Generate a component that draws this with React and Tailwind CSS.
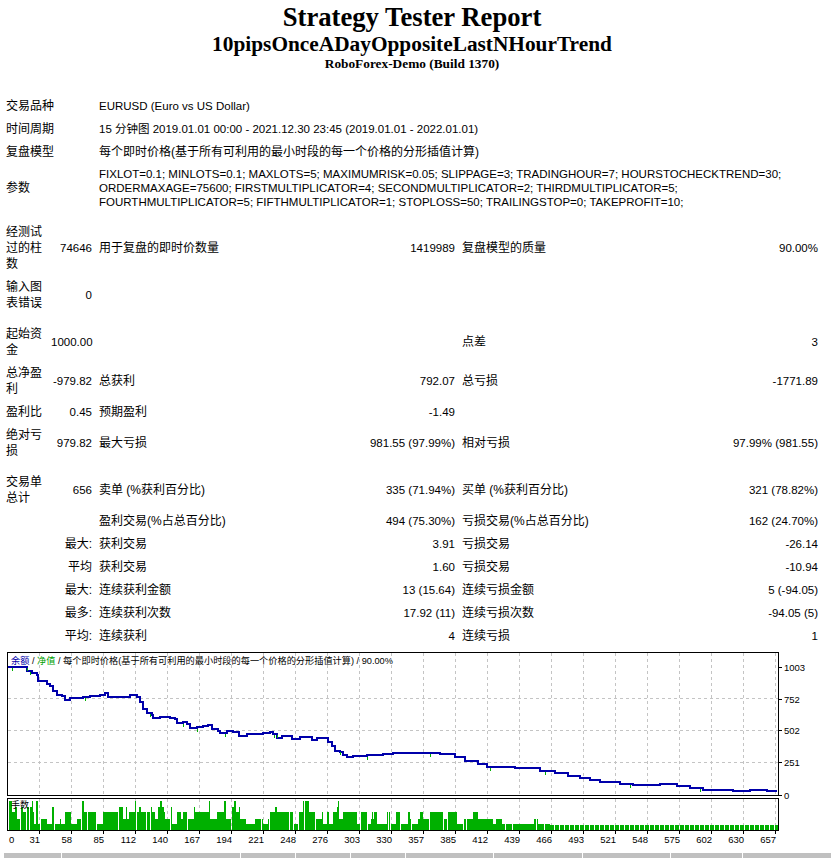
const equity = [
  [7, 668], [25, 668], [27, 672], [32, 674], [37, 676], [38, 682], [43, 682], [47, 685], [50, 687],
  [53, 692], [57, 696], [62, 697], [65, 701], [70, 699], [83, 698], [90, 697], [100, 696], [105, 694],
  [108, 698], [113, 698], [125, 698], [130, 696], [133, 696], [137, 698], [140, 703], [143, 710],
  [147, 714], [152, 716], [153, 719], [160, 718], [167, 718], [170, 719], [175, 720], [177, 724],
  [183, 723], [187, 725], [190, 729], [197, 728], [203, 727], [208, 726], [212, 730], [218, 732],
  [220, 734], [227, 732], [233, 733], [239, 737], [247, 735], [253, 735], [263, 734], [270, 733],
  [273, 735], [277, 739], [282, 737], [287, 737], [292, 740], [300, 738], [310, 738], [312, 741],
  [317, 739], [325, 739], [328, 743], [332, 747], [335, 752], [340, 753], [343, 756], [347, 758],
  [353, 757], [367, 756], [383, 755], [393, 754], [420, 754], [440, 755], [455, 758], [465, 762],
  [478, 765], [487, 768], [500, 768], [515, 769], [530, 769], [540, 772], [555, 774], [568, 777],
  [580, 779], [590, 781], [600, 783], [620, 785], [633, 786], [660, 785], [677, 787], [690, 789],
  [703, 791], [717, 791], [733, 792], [750, 791], [767, 792], [776, 793],
];

const ticks = [
  12, 27, 30, 85, 150, 183, 197, 225, 274, 277, 340, 367, 430, 490, 545, 630, 700,
];

const xLabels = [
  31, 58, 85, 112, 140, 167, 194, 221, 248, 276, 303, 330, 357, 385, 412, 439, 466, 493, 521, 548,
  575, 602, 630, 657,
];

const yLabels = [
  ["1003", 668],
  ["752", 700],
  ["502", 731],
  ["251", 763],
  ["0", 796],
];

const headCells = [57, 178, 54, 54, 54, 87, 88, 87, 71, 88];

function volumeBars() {
  let seed = 11;
  const rnd = () => {
    seed = (seed * 16807) % 2147483647;
    return seed / 2147483647;
  };
  const bars = [];
  let x = 9;
  while (x < 550) {
    let levels;
    if (x < 340) levels = [802, 808, 808, 813, 813, 813, 820, 820, 825];
    else if (x < 480) levels = [813, 813, 820, 825];
    else levels = [820, 825, 825];
    const top = levels[Math.floor(rnd() * levels.length)];
    const run = top < 810 ? 1 + Math.floor(rnd() * 2) : 1 + Math.floor(rnd() * 6);
    bars.push({ x, w: run, top });
    x += run;
    if (rnd() < 0.3) x += 1;
  }
  for (; x < 776; x += 5) bars.push({ x, w: 4, top: 826 });
  return bars;
}

// stair-step the balance line like the terminal draws it
function stepPoints(list) {
  const out = [list[0]];
  for (let i = 1; i < list.length; i++) {
    out.push([list[i][0], list[i - 1][1]]);
    out.push(list[i]);
  }
  return out.map((p) => p.join(",")).join(" ");
}

function Chart() {
  const grid = Array.from({ length: 24 }, (_, k) => 39 + 32 * k);
  const bars = volumeBars();
  const at = (x) => {
    for (let i = 1; i < equity.length; i++) {
      if (equity[i][0] >= x) return equity[i - 1][1];
    }
    return 792;
  };

  return (
    <svg
      width="832"
      height="205"
      viewBox="0 649 832 205"
      className="block"
      fontFamily="'Liberation Sans','Noto Sans CJK SC',sans-serif"
    >
      <rect x="0" y="649" width="832" height="205" fill="#fff" />

      {/* grid */}
      {grid.map((x) => (
        <g key={x} stroke="#c4c4c4" strokeDasharray="3 3">
          <line x1={x + 0.5} y1="654" x2={x + 0.5} y2="796" />
          <line x1={x + 0.5} y1="800" x2={x + 0.5} y2="831" />
        </g>
      ))}
      {[699, 731, 763].map((y) => (
        <line key={y} x1="8" y1={y + 0.5} x2="778" y2={y + 0.5} stroke="#c4c4c4" strokeDasharray="3 3" />
      ))}

      {/* volume */}
      {bars.map((b, i) => (
        <rect key={i} x={b.x} y={b.top} width={b.w} height={831 - b.top} fill="#00b000" />
      ))}

      {/* equity line */}
      <polyline
        points={stepPoints(equity)}
        fill="none"
        stroke="#0000aa"
        strokeWidth="2"
        shapeRendering="crispEdges"
      />
      {ticks.map((x) => (
        <rect key={x} x={x} y={at(x) + 1} width="1" height="3" fill="#00b000" />
      ))}

      {/* frames */}
      <rect x="7.5" y="653.5" width="771" height="143" fill="none" stroke="#000" />
      <rect x="7.5" y="799.5" width="771" height="32" fill="none" stroke="#000" />

      <text x="11" y="665" fontSize="9.2" fill="#000">
        <tspan fill="#0000aa">余额</tspan>
        <tspan> / </tspan>
        <tspan fill="#00a000">净值</tspan>
        <tspan> / 每个即时价格(基于所有可利用的最小时段的每一个价格的分形插值计算) / 90.00%</tspan>
      </text>
      <text x="11" y="809" fontSize="9" fill="#000">手数</text>

      {/* right axis */}
      {yLabels.map(([t, y]) => (
        <g key={t}>
          <line x1="779" y1={y + 0.5} x2="782" y2={y + 0.5} stroke="#000" />
          <text x="784" y={y + 3.5} fontSize="9.5" fill="#000">{t}</text>
        </g>
      ))}

      {/* bottom axis */}
      {grid.map((x) => (
        <line key={x} x1={x + 0.5} y1="832" x2={x + 0.5} y2="835" stroke="#000" />
      ))}
      <text x="9" y="844" fontSize="9.5" fill="#000">0</text>
      {xLabels.map((v, k) => (
        <text key={v} x={grid[k] + 1} y="844" fontSize="9.5" fill="#000" textAnchor="end">
          {v}
        </text>
      ))}
    </svg>
  );
}

export default function App() {
  return (
    <div className="w-[832px] h-[858px] overflow-hidden bg-white text-black font-['Liberation_Sans','Noto_Sans_CJK_SC',sans-serif] text-[11.5px] leading-[16px]">
      <div className="ml-[2px] w-[820px]">
        {/* Header */}
        <div className="pt-[2px] text-center font-['Liberation_Serif','Noto_Serif_CJK_SC',serif] font-bold">
          <div className="text-[26.67px] leading-[30px]">Strategy Tester Report</div>
          <div className="text-[21.33px] leading-[24px]">10pipsOnceADayOppositeLastNHourTrend</div>
          <div className="text-[13.33px] leading-[16px]">RoboForex-Demo (Build 1370)</div>
        </div>

        {/* Summary table */}
        <div className="mt-[22px] grid grid-cols-[44px_47px_200px_161px_200px_161px] gap-px p-px">
          <div className="col-span-2 self-center p-[3px] text-[12px]">交易品种</div>
          <div className="col-span-4 self-center p-[3px]">EURUSD (Euro vs US Dollar)</div>

          <div className="col-span-2 self-center p-[3px] text-[12px]">时间周期</div>
          <div className="col-span-4 self-center p-[3px]">15 分钟图 2019.01.01 00:00 - 2021.12.30 23:45 (2019.01.01 - 2022.01.01)</div>

          <div className="col-span-2 self-center p-[3px] text-[12px]">复盘模型</div>
          <div className="col-span-4 self-center p-[3px] text-[12px]">每个即时价格(基于所有可利用的最小时段的每一个价格的分形插值计算)</div>

          <div className="col-span-2 self-center p-[3px] text-[12px]">参数</div>
          <div className="col-span-4 self-center p-[3px] leading-[14px] whitespace-nowrap">
            FIXLOT=0.1; MINLOTS=0.1; MAXLOTS=5; MAXIMUMRISK=0.05; SLIPPAGE=3; TRADINGHOUR=7; HOURSTOCHECKTREND=30;
            <br />
            ORDERMAXAGE=75600; FIRSTMULTIPLICATOR=4; SECONDMULTIPLICATOR=2; THIRDMULTIPLICATOR=5;
            <br />
            FOURTHMULTIPLICATOR=5; FIFTHMULTIPLICATOR=1; STOPLOSS=50; TRAILINGSTOP=0; TAKEPROFIT=10;
          </div>

          <div className="col-span-6 h-[7px]" />

          <div className="self-center p-[3px] text-[12px]">经测试过的柱数</div>
          <div className="self-center p-[3px] text-right">74646</div>
          <div className="self-center p-[3px] text-[12px]">用于复盘的即时价数量</div>
          <div className="self-center p-[3px] text-right">1419989</div>
          <div className="self-center p-[3px] text-[12px]">复盘模型的质量</div>
          <div className="self-center p-[3px] text-right">90.00%</div>

          <div className="self-center p-[3px] text-[12px]">输入图表错误</div>
          <div className="self-center p-[3px] text-right">0</div>
          <div className="col-span-4" />

          <div className="col-span-6 h-[7px]" />

          <div className="self-center p-[3px] text-[12px]">起始资金</div>
          <div className="self-center p-[3px] text-right">1000.00</div>
          <div className="col-span-2" />
          <div className="self-center p-[3px] text-[12px]">点差</div>
          <div className="self-center p-[3px] text-right">3</div>

          <div className="self-center p-[3px] text-[12px]">总净盈利</div>
          <div className="self-center p-[3px] text-right">-979.82</div>
          <div className="self-center p-[3px] text-[12px]">总获利</div>
          <div className="self-center p-[3px] text-right">792.07</div>
          <div className="self-center p-[3px] text-[12px]">总亏损</div>
          <div className="self-center p-[3px] text-right">-1771.89</div>

          <div className="self-center p-[3px] text-[12px]">盈利比</div>
          <div className="self-center p-[3px] text-right">0.45</div>
          <div className="self-center p-[3px] text-[12px]">预期盈利</div>
          <div className="self-center p-[3px] text-right">-1.49</div>
          <div className="col-span-2" />

          <div className="self-center p-[3px] text-[12px]">绝对亏损</div>
          <div className="self-center p-[3px] text-right">979.82</div>
          <div className="self-center p-[3px] text-[12px]">最大亏损</div>
          <div className="self-center p-[3px] text-right">981.55 (97.99%)</div>
          <div className="self-center p-[3px] text-[12px]">相对亏损</div>
          <div className="self-center p-[3px] text-right">97.99% (981.55)</div>

          <div className="col-span-6 h-[7px]" />

          <div className="self-center p-[3px] text-[12px]">交易单总计</div>
          <div className="self-center p-[3px] text-right">656</div>
          <div className="self-center p-[3px] text-[12px]">卖单 (%获利百分比)</div>
          <div className="self-center p-[3px] text-right">335 (71.94%)</div>
          <div className="self-center p-[3px] text-[12px]">买单 (%获利百分比)</div>
          <div className="self-center p-[3px] text-right">321 (78.82%)</div>

          <div className="col-span-2" />
          <div className="self-center p-[3px] text-[12px]">盈利交易(%占总百分比)</div>
          <div className="self-center p-[3px] text-right">494 (75.30%)</div>
          <div className="self-center p-[3px] text-[12px]">亏损交易(%占总百分比)</div>
          <div className="self-center p-[3px] text-right">162 (24.70%)</div>

          <div className="col-span-2 self-center p-[3px] text-right text-[12px]">最大:</div>
          <div className="self-center p-[3px] text-[12px]">获利交易</div>
          <div className="self-center p-[3px] text-right">3.91</div>
          <div className="self-center p-[3px] text-[12px]">亏损交易</div>
          <div className="self-center p-[3px] text-right">-26.14</div>

          <div className="col-span-2 self-center p-[3px] text-right text-[12px]">平均</div>
          <div className="self-center p-[3px] text-[12px]">获利交易</div>
          <div className="self-center p-[3px] text-right">1.60</div>
          <div className="self-center p-[3px] text-[12px]">亏损交易</div>
          <div className="self-center p-[3px] text-right">-10.94</div>

          <div className="col-span-2 self-center p-[3px] text-right text-[12px]">最大:</div>
          <div className="self-center p-[3px] text-[12px]">连续获利金额</div>
          <div className="self-center p-[3px] text-right">13 (15.64)</div>
          <div className="self-center p-[3px] text-[12px]">连续亏损金额</div>
          <div className="self-center p-[3px] text-right">5 (-94.05)</div>

          <div className="col-span-2 self-center p-[3px] text-right text-[12px]">最多:</div>
          <div className="self-center p-[3px] text-[12px]">连续获利次数</div>
          <div className="self-center p-[3px] text-right">17.92 (11)</div>
          <div className="self-center p-[3px] text-[12px]">连续亏损次数</div>
          <div className="self-center p-[3px] text-right">-94.05 (5)</div>

          <div className="col-span-2 self-center p-[3px] text-right text-[12px]">平均:</div>
          <div className="self-center p-[3px] text-[12px]">连续获利</div>
          <div className="self-center p-[3px] text-right">4</div>
          <div className="self-center p-[3px] text-[12px]">连续亏损</div>
          <div className="self-center p-[3px] text-right">1</div>
        </div>
      </div>

      {/* Chart */}
      <Chart />

      {/* Trades table header strip (cut off by the window) */}
      <div className="ml-[4px] flex gap-px">
        {headCells.map((w, i) => (
          <div key={i} className="h-[20px] bg-[#c0c0c0]" style={{ width: w }} />
        ))}
      </div>
    </div>
  );
}
